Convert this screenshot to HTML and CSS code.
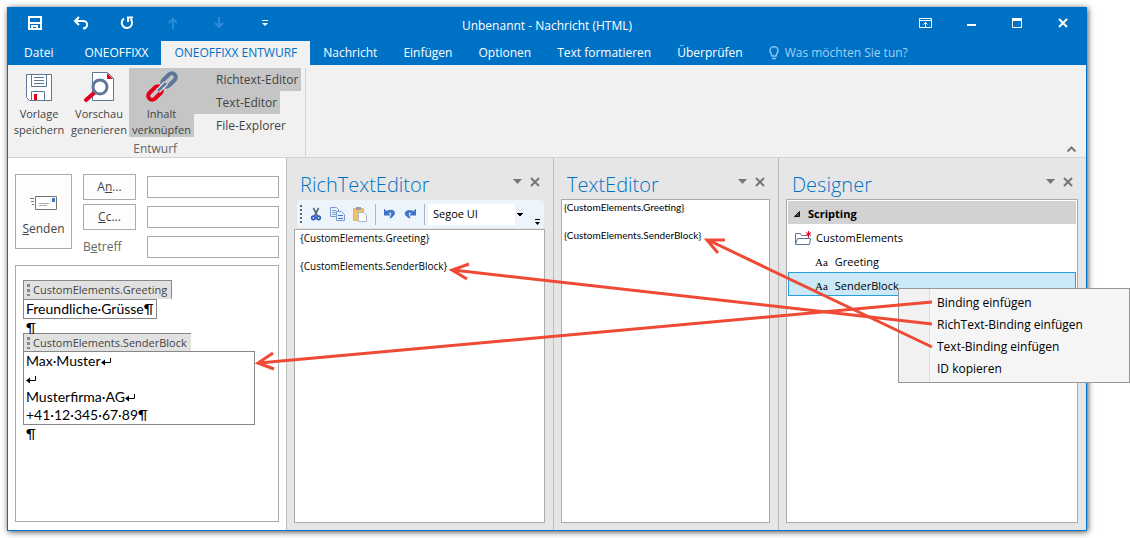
FILE: index.html
```html
<!DOCTYPE html>
<html lang="de">
<head>
    <meta charset="UTF-8">
    <meta name="viewport" content="width=device-width, initial-scale=1.0">
    <title>Unbenannt - Nachricht (HTML)</title>
    <link rel="stylesheet" href="styles.css">
</head>
<body>

<div class="window">
    <header class="titlebar">
        <div class="quick-access">
            <button type="button" aria-label="Speichern">
                <svg width="14" height="14" viewBox="0 0 14 14" fill="none" stroke="#fff" stroke-width="2"><path d="M1 1h12v12H1zM1 7h12M4 13v-3h5v3"/></svg>
            </button>
            <button type="button" aria-label="Rückgängig">
                <svg width="16" height="14" viewBox="0 0 16 14" fill="none" stroke="#fff" stroke-width="2"><path d="M6 1L2 5l4 4M2 5h8c6 0 5 7 0 7.500"/></svg>
            </button>
            <button type="button" aria-label="Wiederholen">
                <svg width="14" height="14" viewBox="0 0 14 14" fill="none" stroke="#fff" stroke-width="2"><path d="M4 2.500A5.200 5.200 0 1 0 10.500 3M8 6V1.500h5"/></svg>
            </button>
            <button type="button" aria-label="Vorheriges Element" disabled>
                <svg width="10" height="12" viewBox="0 0 10 12" fill="none" stroke="#2b8bd8" stroke-width="2"><path d="M5 12V2M1 6l4-4 4 4"/></svg>
            </button>
            <button type="button" aria-label="Nächstes Element" disabled>
                <svg width="10" height="12" viewBox="0 0 10 12" fill="none" stroke="#2b8bd8" stroke-width="2"><path d="M5 0v10M1 6l4 4 4-4"/></svg>
            </button>
            <button type="button" aria-label="Symbolleiste anpassen">
                <svg width="6" height="6" viewBox="0 0 6 6" fill="#fff"><path d="M0 0h6v1H0zM0 3h6L3 6z"/></svg>
            </button>
        </div>
        <h1 class="window-title">Unbenannt - Nachricht (HTML)</h1>
        <div class="window-controls">
            <button type="button" aria-label="Menübandanzeige">
                <svg width="13" height="10" viewBox="0 0 13 10" fill="none" stroke="#fff"><path d="M.5.5h12v9H.5zM.5 2.500h12M6.500 9V4.500M4.500 6.500l2-2 2 2"/></svg>
            </button>
            <button type="button" aria-label="Minimieren">
                <svg width="9" height="10" viewBox="0 0 9 10" fill="#fff"><path d="M0 6h9v2H0z"/></svg>
            </button>
            <button type="button" aria-label="Maximieren">
                <svg width="10" height="10" viewBox="0 0 10 10" fill="none" stroke="#fff"><path d="M.5.5h9v9H.5z"/><path d="M0 1.500h10" stroke-width="3"/></svg>
            </button>
            <button type="button" aria-label="Schliessen">
                <svg width="10" height="10" viewBox="0 0 10 10" fill="none" stroke="#fff" stroke-width="2"><path d="M1 1l8 8M9 1L1 9"/></svg>
            </button>
        </div>
    </header>

    <nav class="tabs">
        <a class="tab tab-file" href="#datei">Datei</a>
        <a class="tab" href="#oneoffixx">ONEOFFIXX</a>
        <a class="tab tab-active" href="#entwurf">ONEOFFIXX ENTWURF</a>
        <a class="tab" href="#nachricht">Nachricht</a>
        <a class="tab" href="#einfuegen">Einfügen</a>
        <a class="tab" href="#optionen">Optionen</a>
        <a class="tab" href="#format">Text formatieren</a>
        <a class="tab" href="#pruefen">Überprüfen</a>
        <a class="tab tab-tell" href="#hilfe">
            <svg width="10" height="14" viewBox="0 0 10 14" fill="none" stroke="#8cc4ef" stroke-width="1.500"><path d="M3 10C3 8 1 7 1 4.500a4 3.800 0 0 1 8 0C9 7 7 8 7 10zM3 12.500h4"/></svg>
            Was möchten Sie tun?
        </a>
    </nav>

    <section class="ribbon">
        <div class="ribbon-group">
            <div class="ribbon-items">
                <button type="button" class="ribbon-btn">
                    <svg width="28" height="32" viewBox="0 0 28 32">
                        <path d="M1.500 3.500h25v26H4.500l-3-3z" fill="#fff" stroke="#5f7797"/>
                        <path d="M6.500 3.500v12h15v-12M6.500 29.500v-9h13v9" fill="none" stroke="#5f7797"/>
                        <path d="M9 6.500h10M9 9.500h10M9 12.500h10" stroke="#5f7797"/>
                        <path d="M9 23h3v6H9z" fill="#e2001a"/>
                    </svg>
                    Vorlage<br>speichern
                </button>
                <button type="button" class="ribbon-btn">
                    <svg width="32" height="32" viewBox="0 0 32 32">
                        <path d="M9.500 1.500h15l6 6v22h-21z" fill="#fff" stroke="#5f7797"/>
                        <path d="M24 2v6h6z" fill="#e2001a"/>
                        <path d="M3 29l8-7" stroke="#e2001a" stroke-width="4" stroke-linecap="round"/>
                        <circle cx="17" cy="16" r="7" fill="#fff" stroke="#5f7797" stroke-width="3"/>
                    </svg>
                    Vorschau<br>generieren
                </button>
                <button type="button" class="ribbon-btn ribbon-btn-on">
                    <svg width="32" height="32" viewBox="0 0 32 32" fill="none" stroke-width="4">
                        <rect x="-8" y="-4" width="16" height="8" rx="4" transform="translate(9 22) rotate(-45)" stroke="#e2001a"/>
                        <rect x="-8" y="-4" width="16" height="8" rx="4" transform="translate(23 9) rotate(-45)" stroke="#5f7797"/>
                        <path d="M12 20l8-8" stroke="#fff" stroke-width="5"/>
                        <path d="M12 20l8-8" stroke="#5f7797" stroke-width="3"/>
                    </svg>
                    Inhalt<br>verknüpfen
                </button>
                <div class="ribbon-stack">
                    <button type="button" class="ribbon-btn-on">Richtext-Editor</button>
                    <button type="button" class="ribbon-btn-on">Text-Editor</button>
                    <button type="button">File-Explorer</button>
                </div>
            </div>
            <div class="ribbon-caption">Entwurf</div>
        </div>
        <button type="button" class="ribbon-collapse" aria-label="Menüband reduzieren">
            <svg width="9" height="6" viewBox="0 0 9 6" fill="none" stroke="#777" stroke-width="2"><path d="M.5 5.500l4-4 4 4"/></svg>
        </button>
    </section>

    <main class="workspace">
        <section class="compose">
            <form class="envelope">
                <button type="button" class="send">
                    <svg width="28" height="16" viewBox="0 0 28 16">
                        <path d="M5.500 1.500h21v13h-21z" fill="#fff" stroke="#777"/>
                        <path d="M0 3.500h4M1 6.500h3M2 9.500h2" stroke="#777"/>
                        <path d="M9 8.500h10M9 10.500h8" stroke="#aaa"/>
                        <path d="M22 3h3v4h-3z" fill="#3f78bd"/>
                    </svg>
                    <span><u>S</u>enden</span>
                </button>
                <button type="button" class="recipient">A<u>n</u>...</button>
                <input type="text" aria-label="An">
                <button type="button" class="recipient"><u>C</u>c...</button>
                <input type="text" aria-label="Cc">
                <label for="subject">B<u>e</u>treff</label>
                <input type="text" id="subject">
            </form>

            <div class="mail-body" contenteditable="true" spellcheck="false">
                <div class="chip chip-line">CustomElements.Greeting</div>
                <p class="field field-inline">Freundliche·Grüsse¶</p>
                <p class="blank">¶</p>
                <div class="chip">CustomElements.SenderBlock</div>
                <div class="field">
                    <p>Max·Muster<svg class="break" width="10" height="8" viewBox="0 0 10 8"><path d="M9.500 0v4.500H2" fill="none" stroke="#000"/><path d="M0 4.500L4 1.500v6z"/></svg></p>
                    <p><svg class="break" width="10" height="8" viewBox="0 0 10 8"><path d="M9.500 0v4.500H2" fill="none" stroke="#000"/><path d="M0 4.500L4 1.500v6z"/></svg></p>
                    <p>Musterfirma·AG<svg class="break" width="10" height="8" viewBox="0 0 10 8"><path d="M9.500 0v4.500H2" fill="none" stroke="#000"/><path d="M0 4.500L4 1.500v6z"/></svg></p>
                    <p>+41·12·345·67·89¶</p>
                </div>
                <p class="blank">¶</p>
            </div>
        </section>

        <section class="pane">
            <div class="pane-head">
                <h2>RichTextEditor</h2>
                <button type="button" aria-label="Menü"><svg width="9" height="5" viewBox="0 0 9 5" fill="#777"><path d="M0 0h9L4.500 5z"/></svg></button>
                <button type="button" aria-label="Schliessen"><svg width="10" height="10" viewBox="0 0 10 10" stroke="#777" stroke-width="2"><path d="M1 1l8 8M9 1L1 9"/></svg></button>
            </div>
            <div class="toolbar">
                <span class="grip"></span>
                <button type="button" aria-label="Ausschneiden">
                    <svg width="12" height="14" viewBox="0 0 14 16" fill="none"><path d="M4 1l5 10M10 1L5 11" stroke="#5b6b80" stroke-width="2"/><circle cx="4" cy="12.500" r="2" stroke="#2a5bc0" stroke-width="2"/><circle cx="10" cy="12.500" r="2" stroke="#2a5bc0" stroke-width="2"/></svg>
                </button>
                <button type="button" aria-label="Kopieren">
                    <svg width="15" height="14" viewBox="0 0 15 14" fill="#e8f1fd" stroke="#7c9ccf"><path d="M.5.500h6l2 2v7h-8z"/><path d="M2 3.500h4M2 5.500h5M2 7.500h4"/><path d="M6.500 4.500h5l3 3v6h-8z"/><path d="M8 8.500h5M8 11.500h5" stroke="#3f74c4"/></svg>
                </button>
                <button type="button" aria-label="Einfügen">
                    <svg width="14" height="15" viewBox="0 0 14 15"><path d="M.5 1.500h10v12H.5z" fill="#f0c36b" stroke="#e3b562"/><path d="M3 0h5v3H3z" fill="#9a9fa8"/><path d="M5.500 5.500h5l3 3v6h-8z" fill="#fff" stroke="#a9b4c6"/></svg>
                </button>
                <span class="divider"></span>
                <button type="button" aria-label="Rückgängig">
                    <svg width="12" height="12" viewBox="0 0 12 12"><path d="M0 1v6h6L4.200 5C7 3 9 5 6 10c6-2 7-11-4-6.500z" fill="#3d74c9" stroke="#3d74c9"/></svg>
                </button>
                <button type="button" aria-label="Wiederholen">
                    <svg width="12" height="12" viewBox="0 0 12 12"><path d="M12 1v6H6l1.800-2C5 3 3 5 6 10-1 8-1 0 10 3.500z" fill="#3d74c9" stroke="#3d74c9"/></svg>
                </button>
                <span class="divider"></span>
                <select aria-label="Schriftart">
                    <option>Segoe UI</option>
                </select>
                <button type="button" class="overflow" aria-label="Weitere Optionen">
                    <svg width="5" height="6" viewBox="0 0 5 6"><path d="M0 0h5v1H0zM0 3h5L2.500 6z"/></svg>
                </button>
            </div>
            <textarea class="editor" aria-label="RichTextEditor" spellcheck="false">{CustomElements.Greeting}

{CustomElements.SenderBlock}</textarea>
        </section>

        <section class="pane">
            <div class="pane-head">
                <h2>TextEditor</h2>
                <button type="button" aria-label="Menü"><svg width="9" height="5" viewBox="0 0 9 5" fill="#777"><path d="M0 0h9L4.500 5z"/></svg></button>
                <button type="button" aria-label="Schliessen"><svg width="10" height="10" viewBox="0 0 10 10" stroke="#777" stroke-width="2"><path d="M1 1l8 8M9 1L1 9"/></svg></button>
            </div>
            <textarea class="editor editor-plain" aria-label="TextEditor" spellcheck="false">{CustomElements.Greeting}

{CustomElements.SenderBlock}</textarea>
        </section>

        <section class="pane">
            <div class="pane-head">
                <h2>Designer</h2>
                <button type="button" aria-label="Menü"><svg width="9" height="5" viewBox="0 0 9 5" fill="#777"><path d="M0 0h9L4.500 5z"/></svg></button>
                <button type="button" aria-label="Schliessen"><svg width="10" height="10" viewBox="0 0 10 10" stroke="#777" stroke-width="2"><path d="M1 1l8 8M9 1L1 9"/></svg></button>
            </div>
            <div class="tree">
                <h3><svg width="6" height="6" viewBox="0 0 6 6" fill="#444" stroke="#111"><path d="M5.500.5v5h-5z"/></svg>Scripting</h3>
                <ul>
                    <li class="folder">
                        <svg width="17" height="15" viewBox="0 0 17 15" fill="#fff" stroke="#5f7797"><path d="M.5 13.500v-11h5l1 2h7v3"/><path d="M.5 13.500l2-6h13l-1 6z"/><path d="M13.500 0v6M11 1.500l5 3M16 1.500l-5 3" stroke="#e2001a"/></svg>
                        CustomElements
                    </li>
                    <li class="leaf"><span class="type">Aa</span>Greeting</li>
                    <li class="leaf selected">
                        <span class="type">Aa</span>SenderBlock
                        <menu class="context-menu">
                            <li><button type="button">Binding einfügen</button></li>
                            <li><button type="button">RichText-Binding einfügen</button></li>
                            <li><button type="button">Text-Binding einfügen</button></li>
                            <li><button type="button">ID kopieren</button></li>
                        </menu>
                    </li>
                </ul>
            </div>
        </section>
    </main>
</div>

<!-- Arrows from the menu entries to the places where the binding ends up -->
<svg class="arrows" viewBox="0 0 1130 538" preserveAspectRatio="none">
    <path d="M932 302L259 363M273 353l-15 10 16 6"/>
    <path d="M932 324L453 270M469 264l-17 6 15 9"/>
    <path d="M932 347L708 240M725 240h-18l11 13"/>
</svg>

</body>
</html>
```
FILE: styles.css
```css
* {
    box-sizing: border-box;
}
body {
    margin: 0;
    min-height: 100vh;
    display: flex;
    position: relative;
    padding: 7px 43px 7px 7px;
    background: #fff;
    color: #444;
    font: 12px/16px "Open Sans", sans-serif;
    overflow: hidden;
}
h1, h2, h3, p, ul, menu {
    margin: 0;
    padding: 0;
    font-weight: normal;
    list-style: none;
}
button, input, select, textarea {
    margin: 0;
    padding: 0;
    border: 0;
    background: none;
    color: inherit;
    font: inherit;
}
svg {
    flex: none;
    display: block;
}
.window {
    flex: 1;
    display: flex;
    flex-direction: column;
    border: 1px solid #0072c6;
    box-shadow: 1px 1px 6px rgba(0, 0, 0, 0.7);
}

/* Title bar */
.titlebar {
    display: grid;
    grid-template-columns: 1fr auto 1fr;
    height: 33px;
    background: #0072c6;
    color: #fff;
}
.quick-access, .window-controls {
    display: flex;
}
.quick-access {
    padding-left: 4px;
}
.window-controls {
    justify-content: flex-end;
}
.titlebar button {
    width: 46px;
    height: 30px;
    display: flex;
    align-items: center;
    justify-content: center;
}
.window-title {
    font-size: 12px;
    line-height: 36px;
}

/* Tabs */
.tabs {
    display: flex;
    height: 24px;
    background: #0072c6;
}
.tab {
    display: flex;
    align-items: center;
    padding: 0 13px;
    color: #fff;
    text-decoration: none;
    white-space: nowrap;
}
.tab-file {
    padding: 0 18px 0 16px;
}
.tab-active {
    background: #f1f1f1;
    color: #0072c6;
}
.tab-tell {
    gap: 6px;
    color: #a3d0f3;
}

/* Ribbon */
.ribbon {
    display: flex;
    justify-content: space-between;
    align-items: flex-end;
    height: 93px;
    padding: 3px 10px 0 0;
    background: #f1f1f1;
    border-bottom: 1px solid #d2d2d2;
}
.ribbon-group {
    padding: 0 4px 0 1px;
    border-right: 1px solid #d2d2d2;
}
.ribbon-items {
    display: flex;
    height: 69px;
}
.ribbon-btn {
    width: 60px;
    display: flex;
    flex-direction: column;
    align-items: center;
    gap: 3px;
    padding-top: 3px;
    font-size: 11px;
    line-height: 16px;
}
.ribbon-btn.ribbon-btn-on {
    width: 65px;
}
.ribbon-btn-on {
    background: #c5c5c5;
}
.ribbon-stack {
    display: flex;
    flex-direction: column;
    align-items: flex-start;
}
.ribbon-stack button {
    height: 23px;
    padding: 0 3px 0 22px;
}
.ribbon-caption {
    padding-top: 4px;
    color: #666;
    text-align: center;
}
.ribbon-collapse {
    padding-bottom: 5px;
}

/* Workspace */
.workspace {
    flex: 1;
    display: grid;
    grid-template-columns: 278fr 267fr 225fr 308fr;
    background: #e6e6e6;
}
.compose {
    display: flex;
    flex-direction: column;
    gap: 5px;
    padding: 16px 7px 8px;
    background: #fff;
}
.envelope {
    display: grid;
    grid-template-columns: 57px 53px 1fr;
    grid-template-rows: repeat(3, 26px);
    gap: 4px 11px;
    align-items: center;
}
.envelope input {
    width: 100%;
    height: 22px;
    padding: 0 4px;
    border: 1px solid #ababab;
}
.envelope label {
    color: #666;
}
.send {
    grid-row: 1 / span 3;
    align-self: start;
    height: 75px;
    display: flex;
    flex-direction: column;
    align-items: center;
    justify-content: flex-end;
    gap: 10px;
    padding-bottom: 11px;
    border: 1px solid #ababab;
    background: #fdfdfd;
}
.recipient {
    height: 26px;
    border: 1px solid #ababab;
    background: #fdfdfd;
}

/* Mail body */
.mail-body {
    flex: 1;
    padding: 14px 7px;
    border: 1px solid #ababab;
    color: #000;
    font: 14px/18px Lato, sans-serif;
}
.chip {
    width: fit-content;
    display: flex;
    align-items: center;
    height: 18px;
    padding: 0 4px 0 3px;
    border-top: 1px solid #888;
    border-left: 1px solid #888;
    background: #e1e1e1;
    color: #444;
    font: 11px/18px "Open Sans", sans-serif;
}
.chip-line {
    height: 19px;
    border: 1px solid #888;
    border-bottom: 0;
}
.chip::before {
    content: "";
    width: 3px;
    height: 12px;
    margin-right: 3px;
    background: repeating-linear-gradient(#888 0 3px, transparent 3px 5px);
}
.field {
    width: 232px;
    max-width: 100%;
    padding: 0 2px;
    border: 1px solid #888;
}
.field-inline {
    width: fit-content;
}
.blank {
    height: 14px;
    padding-left: 3px;
}
.break {
    display: inline-block;
}

/* Side panes */
.pane {
    display: flex;
    flex-direction: column;
    min-width: 0;
    padding: 0 8px 7px 7px;
    border-left: 1px solid #bdbdbd;
}
.pane-head {
    display: flex;
    align-items: center;
    gap: 8px;
    height: 41px;
    padding: 6px 5px 0 6px;
}
.pane-head h2 {
    flex: 1;
    padding-top: 6px;
    color: #0072c6;
    font-size: 20px;
    font-weight: 300;
    line-height: 28px;
}
.editor {
    flex: 1;
    width: 100%;
    padding: 1px 5px;
    border: 1px solid #ababab;
    background: #fff;
    color: #000;
    font-size: 10px;
    line-height: 14px;
    resize: none;
}
.editor-plain {
    padding: 0 2px;
    font-family: Lato, sans-serif;
}
.toolbar {
    display: flex;
    align-items: center;
    gap: 8px;
    height: 28px;
    margin: 1px 1px 1px 3px;
    padding-left: 3px;
    border-radius: 4px;
    background: #eef4fc;
    color: #000;
    font-size: 11px;
}
.grip {
    width: 2px;
    height: 18px;
    background: repeating-linear-gradient(#666 0 2px, transparent 2px 4px);
}
.divider {
    width: 1px;
    height: 21px;
    background: #a9b4c6;
}
.toolbar select {
    width: 100px;
    height: 21px;
    margin-left: -5px;
    padding-left: 5px;
    appearance: none;
    background:
        conic-gradient(from -45deg at 50% 100%, #000 90deg, transparent 0) right 4px center / 6px 3px no-repeat,
        linear-gradient(#eef4fc, #eef4fc) right / 12px 100% no-repeat,
        #fff;
}
.toolbar .overflow {
    align-self: flex-end;
    margin-left: auto;
    padding: 0 4px 3px 0;
}

/* Designer tree */
.tree {
    flex: 1;
    padding: 1px;
    border: 1px solid #ababab;
    background: #fff;
    color: #000;
    font-size: 11px;
}
.tree h3 {
    display: flex;
    align-items: center;
    gap: 8px;
    height: 23px;
    padding: 3px 6px 0;
    background: #d2d2d2;
    font-size: 11px;
    font-weight: bold;
}
.folder, .leaf {
    display: flex;
    align-items: center;
    height: 24px;
    padding-top: 4px;
    border: 1px solid transparent;
}
.folder {
    gap: 4px;
    padding-left: 6px;
}
.leaf {
    gap: 7px;
    padding-left: 26px;
}
.type {
    font: 11px/14px "Liberation Serif", serif;
}
.selected {
    position: relative;
    border-color: #26a0da;
    background: #cbe8f6;
}
.context-menu {
    position: absolute;
    top: 15px;
    left: 109px;
    width: 232px;
    padding: 3px 2px 2px;
    border: 1px solid #979797;
    background: linear-gradient(90deg, #f1f1f1 30px, #dedede 30px 31px, #f5f5f5 31px);
    font-size: 12px;
}
.context-menu button {
    width: 100%;
    height: 22px;
    padding-left: 36px;
    text-align: left;
}

.arrows {
    position: absolute;
    top: 0;
    left: 0;
    width: 100%;
    height: 100%;
    fill: none;
    stroke: #ee4a35;
    stroke-width: 3;
    pointer-events: none;
}
```
